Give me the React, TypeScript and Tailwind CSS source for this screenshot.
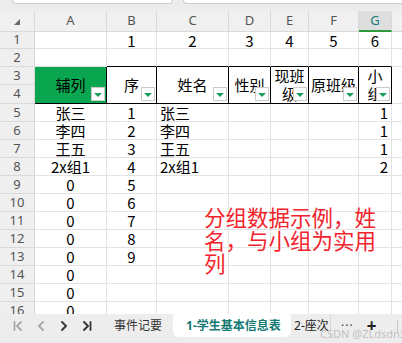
import React from 'react'

const W = ['w-[35px]', 'w-[72px]', 'w-[50px]', 'w-[72px]', 'w-[42px]', 'w-[38px]', 'w-[50px]', 'w-[33px]']
const LETTERS = ['A', 'B', 'C', 'D', 'E', 'F', 'G']
const ALIGN = [
  'justify-center',
  'justify-center',
  'justify-start pl-[3px]',
  'justify-center',
  'justify-center',
  'justify-center',
  'justify-end pr-[3px]',
]

const cellFont = "font-['Noto_Sans_CJK_SC',sans-serif]"
const uiFont = "font-['Noto_Sans','Noto_Sans_CJK_SC',sans-serif]"

const body: { n: number; v: string[] }[] = [
  { n: 5, v: ['张三', '1', '张三', '', '', '', '1'] },
  { n: 6, v: ['李四', '2', '李四', '', '', '', '1'] },
  { n: 7, v: ['王五', '3', '王五', '', '', '', '1'] },
  { n: 8, v: ['2x组1', '4', '2x组1', '', '', '', '2'] },
  { n: 9, v: ['0', '5'] },
  { n: 10, v: ['0', '6'] },
  { n: 11, v: ['0', '7'] },
  { n: 12, v: ['0', '8'] },
  { n: 13, v: ['0', '9'] },
  { n: 14, v: ['0'] },
  { n: 15, v: ['0'] },
  { n: 16, v: ['0'] },
]

const heads = [
  { t: '辅列', green: true },
  { t: '序' },
  { t: '姓名' },
  { t: '性别' },
  { t: '现班级' },
  { t: '原班级' },
  { t: '小组' },
]

function RowNum({ n, h = 'h-[18px]' }: { n: number; h?: string }) {
  return (
    <div
      className={`${W[0]} ${h} shrink-0 flex items-center justify-center bg-[#efefef] border-r border-b border-[#d9d9d9] text-[13px] text-[#555] ${uiFont}`}
    >
      {n}
    </div>
  )
}

function FilterBtn() {
  return (
    <div className="absolute right-[1px] bottom-[2px] w-[14px] h-[14px] bg-white border border-[#cacaca] flex items-center justify-center">
      <div className="w-0 h-0 border-l-[4px] border-r-[4px] border-t-[4px] border-l-transparent border-r-transparent border-t-[#16a05a] mt-[1px]" />
    </div>
  )
}

function NavIcon({ kind, dark }: { kind: 'first' | 'prev' | 'next' | 'last'; dark?: boolean }) {
  const c = dark ? '#333' : '#a8a8a8'
  return (
    <svg width="10" height="10" viewBox="0 0 10 10" fill="none" stroke={c} strokeWidth="1.8" strokeLinecap="round" strokeLinejoin="round">
      {kind === 'first' && (
        <>
          <line x1="1.5" y1="1" x2="1.5" y2="9" />
          <polyline points="8,1 4,5 8,9" />
        </>
      )}
      {kind === 'prev' && <polyline points="7,1 3,5 7,9" />}
      {kind === 'next' && <polyline points="3,1 7,5 3,9" />}
      {kind === 'last' && (
        <>
          <polyline points="2,1 6,5 2,9" />
          <line x1="8.5" y1="1" x2="8.5" y2="9" />
        </>
      )}
    </svg>
  )
}

export default function App() {
  return (
    <div className="relative w-[402px] h-[343px] overflow-hidden bg-white flex flex-col">
      {/* toolbar strip */}
      <div className="h-[11px] shrink-0 bg-[#ececec] relative">
        <div className="absolute left-[12px] top-0 w-[161px] h-[4px] bg-white border-x border-b border-[#cfcfcf] rounded-b-[5px]" />
        <div className="absolute left-[183px] top-0 right-0 h-[4px] bg-white border-l border-b border-[#cfcfcf] rounded-bl-[5px]" />
      </div>

      {/* grid */}
      <div className="flex-1 min-h-0 overflow-hidden flex flex-col">
        {/* column letters */}
        <div className={`flex h-[21px] shrink-0 bg-[#f0f0f0] ${uiFont} text-[13px] text-[#555]`}>
          <div className={`${W[0]} shrink-0 border-r border-b border-[#d9d9d9] flex items-center justify-center`}>
            <svg width="7" height="7" viewBox="0 0 7 7" className="mt-[2px]">
              <polygon points="6,0 6,6 0,6" fill="#6a6a6a" />
            </svg>
          </div>
          {LETTERS.map((l, i) =>
            l === 'G' ? (
              <div
                key={l}
                className={`${W[i + 1]} shrink-0 flex items-center justify-center bg-[#dedede] border-b-2 border-b-[#2e9a3c] border-r border-r-[#d9d9d9] text-[#1b7c7c]`}
              >
                {l}
              </div>
            ) : (
              <div key={l} className={`${W[i + 1]} shrink-0 flex items-center justify-center border-r border-b border-[#d9d9d9]`}>
                {l}
              </div>
            )
          )}
          <div className="flex-1 border-b border-[#d9d9d9]" />
        </div>

        {/* row 1 */}
        <div className={`flex h-[17px] shrink-0 ${cellFont} text-[15px] text-black`}>
          <RowNum n={1} h="h-[17px]" />
          {['', '1', '2', '3', '4', '5', '6'].map((v, i) => (
            <div key={i} className={`${W[i + 1]} shrink-0 flex items-center justify-center border-r border-b border-[#e3e3e3] leading-none`}>
              {v}
            </div>
          ))}
          <div className="flex-1 border-b border-[#e3e3e3]" />
        </div>

        {/* row 2 */}
        <div className="flex h-[18px] shrink-0">
          <RowNum n={2} />
          {LETTERS.map((l, i) => (
            <div
              key={l}
              className={`${W[i + 1]} shrink-0 border-r border-r-[#e3e3e3] border-b ${i === 0 ? 'border-b-[#e3e3e3]' : 'border-b-black'}`}
            />
          ))}
          <div className="flex-1 border-b border-[#e3e3e3]" />
        </div>

        {/* rows 3-4: merged headers */}
        <div className={`flex h-[37px] shrink-0 ${cellFont} text-[15px] text-black`}>
          <div className="flex flex-col shrink-0">
            <RowNum n={3} />
            <RowNum n={4} h="h-[19px]" />
          </div>
          {heads.map((h, i) => (
            <div
              key={i}
              className={`${W[i + 1]} shrink-0 relative flex items-center justify-center text-center px-[2px] leading-[18px] border-r border-b border-black overflow-hidden ${
                h.green ? 'bg-[#0aa64f]' : 'bg-white'
              }`}
            >
              <span>{h.t}</span>
              <FilterBtn />
            </div>
          ))}
          <div className="flex-1 border-b border-[#e3e3e3]" />
        </div>

        {/* data rows */}
        {body.map((r) => (
          <div key={r.n} className={`flex h-[18px] shrink-0 ${cellFont} text-[15px] text-black`}>
            <RowNum n={r.n} />
            {LETTERS.map((l, i) => (
              <div
                key={l}
                className={`${W[i + 1]} shrink-0 flex items-center ${ALIGN[i]} border-r border-b border-[#e3e3e3] leading-none whitespace-nowrap`}
              >
                {r.v[i] ?? ''}
              </div>
            ))}
            <div className="flex-1 border-b border-[#e3e3e3]" />
          </div>
        ))}
      </div>

      {/* floating text box */}
      <div className={`absolute left-[204px] top-[205px] w-[176px] text-[21.5px] leading-[23px] text-[#f2232c] ${cellFont}`}>
        分组数据示例，姓名，与小组为实用列
      </div>

      {/* sheet tabs */}
      <div className={`h-[29px] shrink-0 bg-[#ededed] flex items-start whitespace-nowrap ${uiFont} text-[12px]`}>
        <div className="flex items-center h-[24px] pl-[13px] gap-[13px] shrink-0">
          <NavIcon kind="first" />
          <NavIcon kind="prev" />
          <NavIcon kind="next" dark />
          <NavIcon kind="last" dark />
        </div>
        <div className="h-[24px] flex items-center ml-[22px] text-[#333] shrink-0">事件记要</div>
        <div className="h-[23px] ml-[11px] w-[118px] shrink-0 bg-white rounded-[6px] rounded-t-[3px] flex items-center pl-[13px] font-bold text-[#137a73]">
          1-学生基本信息表
        </div>
        <div className="h-[24px] w-[40px] flex items-center pl-[3px] shrink-0 text-[#222] border-r border-[#d8d8d8]">2-座次</div>
        <div className="h-[24px] flex items-center ml-[10px] text-[#444] tracking-[1px] shrink-0">···</div>
        <div className="h-[24px] flex items-center ml-[13px] text-[17px] font-bold text-[#222] shrink-0">+</div>
        <div className="ml-auto mr-[4px] mt-[6px] w-px h-[12px] bg-[#c8c8c8] shrink-0" />
      </div>

      {/* watermark */}
      <div className={`absolute left-[320px] top-[326px] whitespace-nowrap text-[11px] text-[#b4b4b4]/80 ${uiFont} pointer-events-none`}>
        CSDN @ZLdsdn36
      </div>
    </div>
  )
}
